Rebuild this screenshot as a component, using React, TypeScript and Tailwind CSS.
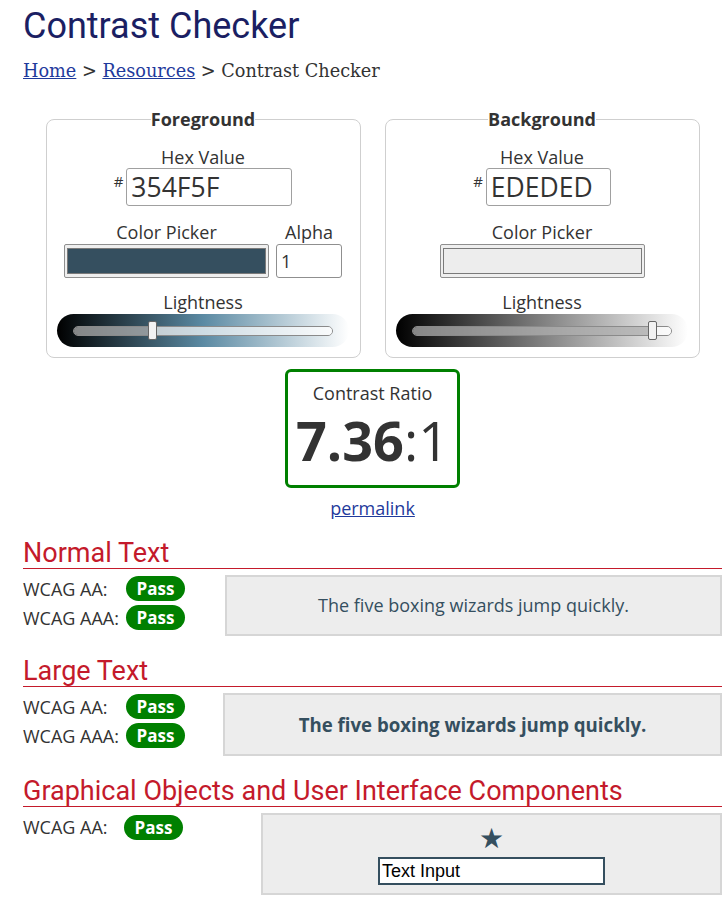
const FG = "#354F5F";

function Pass() {
  return (
    <span className="inline-flex items-center justify-center w-[59px] h-[25px] rounded-full bg-[#008000] text-white font-bold text-[17px] leading-none">
      Pass
    </span>
  );
}

function Slider({ fg }: { fg: boolean }) {
  return (
    <div
      className={
        "relative w-[292px] h-[33px] rounded-full mx-auto flex items-center px-[16px] " +
        (fg
          ? "bg-[linear-gradient(to_right,#000000,#5b8aa3,#ffffff)]"
          : "bg-[linear-gradient(to_right,#000000,#808080,#ffffff)]")
      }
    >
      <div className="relative w-[264px] h-[10px] rounded-full border border-[#8a8a8a] overflow-visible flex">
        <div
          className={
            "h-full rounded-l-full bg-[rgba(175,175,175,0.75)] " + (fg ? "w-[79px]" : "w-[240px]")
          }
        />
        <div className="h-full flex-1 rounded-r-full bg-[rgba(255,255,255,0.7)]" />
        <div
          className={
            "absolute top-[-6px] w-[9px] h-[19px] rounded-[2px] border-[1.5px] border-[#666] bg-[#f2f2f2] " +
            (fg ? "left-[74px]" : "left-[235px]")
          }
        />
      </div>
    </div>
  );
}

function ColorBox({ fg }: { fg: boolean }) {
  return (
    <fieldset className="w-[315px] border border-[#cfcfcf] rounded-[8px] pt-[15px] pb-[10px] px-0 m-0">
      <legend className="mx-auto px-0 font-bold text-[18px] leading-[24px] text-[#333]">
        {fg ? "Foreground" : "Background"}
      </legend>
      <div className="text-center text-[18px] leading-[22px]">Hex Value</div>
      <div className="flex justify-center items-start">
        <span className="text-[15px] leading-none mt-[6px] mr-[3px]">#</span>
        <div
          className={
            "h-[38px] border border-[#a0a0a0] rounded-[3px] pl-[4px] flex items-center text-[26.5px] leading-none text-[#333] " +
            (fg ? "w-[166px]" : "w-[125px]")
          }
        >
          {fg ? "354F5F" : "EDEDED"}
        </div>
      </div>
      <div className="flex justify-center gap-[7px] mt-[15px]">
        <div className="flex flex-col items-center">
          <div className="text-[18px] leading-[22px]">Color Picker</div>
          <div className="mt-[1px] w-[205px] h-[34px] border border-[#8f8f8f] rounded-[2px] bg-[#efefef] px-[2px] py-[3px]">
            <div
              className={
                "w-full h-full border border-[#7a7a7a] " + (fg ? "bg-[#354F5F]" : "bg-[#EDEDED]")
              }
            />
          </div>
        </div>
        {fg && (
          <div className="flex flex-col items-center">
            <div className="text-[18px] leading-[22px]">Alpha</div>
            <div className="mt-[1px] w-[66px] h-[34px] border border-[#8f8f8f] rounded-[3px] pl-[4px] flex items-center text-[18px] leading-none">
              1
            </div>
          </div>
        )}
      </div>
      <div className="text-center text-[18px] leading-[22px] mt-[13px]">Lightness</div>
      <div className="mt-[1px]">
        <Slider fg={fg} />
      </div>
    </fieldset>
  );
}

function Heading({ children }: { children: React.ReactNode }) {
  return (
    <h2 className="font-['Roboto',sans-serif] text-[27px] leading-[30px] text-[#c41a2b] border-b border-[#c41a2b]">
      {children}
    </h2>
  );
}

function Label({ children, w }: { children: React.ReactNode; w: string }) {
  return <span className={"text-[18px] leading-[22px] " + w}>{children}</span>;
}

export default function App() {
  return (
    <div className="bg-white text-[#333] font-['Open_Sans',sans-serif] w-[726px] min-h-[900px] pl-[23px] pr-[4px] pt-[5px]">
      <h1 className="font-['Roboto',sans-serif] text-[36px] leading-[42px] text-[#1b1f63]">
        Contrast Checker
      </h1>
      <nav className="font-['DejaVu_Serif',serif] text-[17.7px] leading-[24px] mt-[12px] text-[#333]">
        <a className="underline text-[#1f3a9c]">Home</a> &gt;{" "}
        <a className="underline text-[#1f3a9c]">Resources</a> &gt; Contrast Checker
      </nav>

      <div className="flex justify-center gap-[24px] mt-[24px]">
        <ColorBox fg={true} />
        <ColorBox fg={false} />
      </div>

      <div className="flex flex-col items-center mt-[11px]">
        <div className="w-[175px] h-[119px] border-[3px] border-[#008000] rounded-[6px] flex flex-col items-center pt-[10px]">
          <div className="text-[18px] leading-[22px]">Contrast Ratio</div>
          <div className="mt-[4px] text-[54px] leading-[64px] text-[#333]">
            <span className="font-bold">7.36</span>:1
          </div>
        </div>
        <a className="mt-[9px] text-[18px] leading-[22px] underline text-[#1f3a9c]">permalink</a>
      </div>

      <div className="mt-[19px]">
        <Heading>Normal Text</Heading>
        <div className="flex mt-[6px]">
          <div className="w-[202px] flex flex-col gap-[4px] pt-[1px]">
            <div className="flex items-center h-[25px]">
              <Label w="w-[103px]">WCAG AA:</Label>
              <Pass />
            </div>
            <div className="flex items-center h-[25px]">
              <Label w="w-[103px]">WCAG AAA:</Label>
              <Pass />
            </div>
          </div>
          <div className="flex-1 h-[61px] bg-[#EDEDED] border-2 border-[#d6d6d6] flex items-center justify-center text-[18px] text-[#354F5F]">
            The five boxing wizards jump quickly.
          </div>
        </div>
      </div>

      <div className="mt-[20px]">
        <Heading>Large Text</Heading>
        <div className="flex mt-[6px]">
          <div className="w-[200px] flex flex-col gap-[4px] pt-[1px]">
            <div className="flex items-center h-[25px]">
              <Label w="w-[103px]">WCAG AA:</Label>
              <Pass />
            </div>
            <div className="flex items-center h-[25px]">
              <Label w="w-[103px]">WCAG AAA:</Label>
              <Pass />
            </div>
          </div>
          <div className="flex-1 h-[63px] bg-[#EDEDED] border-2 border-[#d6d6d6] flex items-center justify-center text-[18.66px] font-bold text-[#354F5F]">
            The five boxing wizards jump quickly.
          </div>
        </div>
      </div>

      <div className="mt-[20px]">
        <Heading>Graphical Objects and User Interface Components</Heading>
        <div className="flex mt-[6px]">
          <div className="w-[238px] pt-[1px]">
            <div className="flex items-center h-[26px]">
              <Label w="w-[101px]">WCAG AA:</Label>
              <Pass />
            </div>
          </div>
          <div className="flex-1 h-[82px] bg-[#EDEDED] border-2 border-[#d6d6d6] flex flex-col items-center pt-[9px]">
            <span className="text-[28px] leading-[30px] text-[#354F5F] font-['DejaVu_Sans',sans-serif]">★</span>
            <div className="mt-[3px] w-[227px] h-[28px] border-2 border-[#354F5F] bg-white pl-[2px] flex items-center font-['Liberation_Sans',sans-serif] text-[18px] text-black">
              Text Input
            </div>
          </div>
        </div>
      </div>
    </div>
  );
}
